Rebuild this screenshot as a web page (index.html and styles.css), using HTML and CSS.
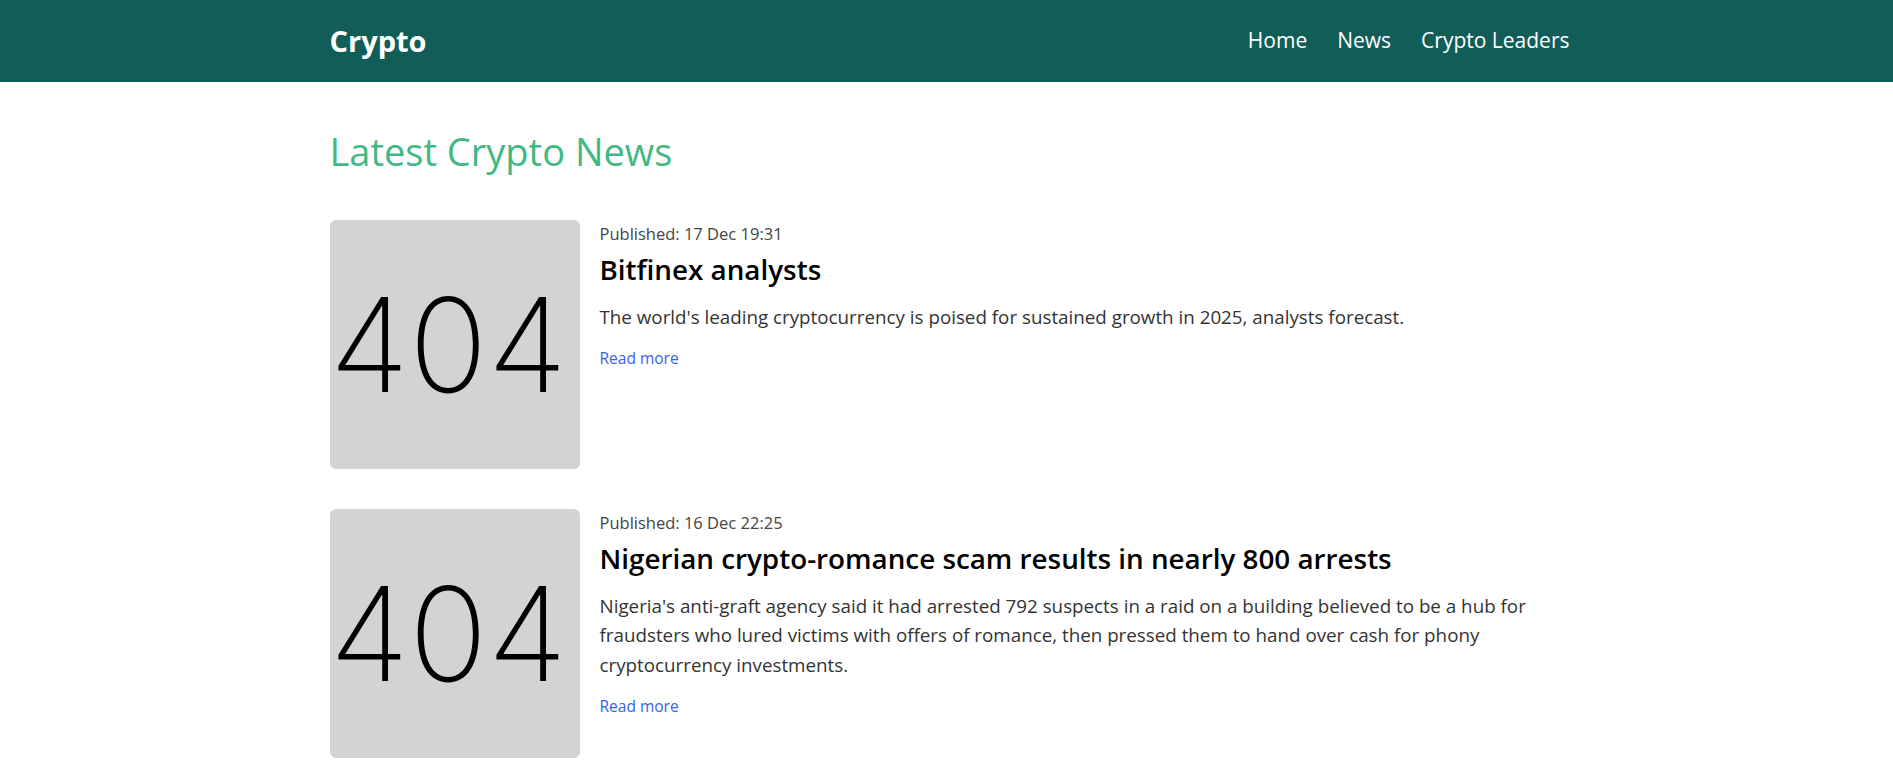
FILE: index.html
```html
<!DOCTYPE html>
<html lang="en">
<head>
<meta charset="utf-8">
<title>Crypto</title>
<link rel="stylesheet" href="styles.css">
</head>
<body>
<header class="navbar">
  <div class="container nav-inner">
    <a class="brand" href="#">Crypto</a>
    <nav class="links">
      <a href="#">Home</a>
      <a href="#">News</a>
      <a href="#">Crypto Leaders</a>
    </nav>
  </div>
</header>
<main class="container">
  <h1 class="page-title">Latest Crypto News</h1>
  <ul class="news-list">
    <li class="news-item">
      <div class="thumb"><span>404</span></div>
      <div class="news-body">
        <p class="meta">Published: 17 Dec 19:31</p>
        <h3 class="title">Bitfinex analysts</h3>
        <p class="desc">The world's leading cryptocurrency is poised for sustained growth in 2025, analysts forecast.</p>
        <a class="read-more" href="#">Read more</a>
      </div>
    </li>
    <li class="news-item">
      <div class="thumb"><span>404</span></div>
      <div class="news-body">
        <p class="meta">Published: 16 Dec 22:25</p>
        <h3 class="title">Nigerian crypto-romance scam results in nearly 800 arrests</h3>
        <p class="desc">Nigeria's anti-graft agency said it had arrested 792 suspects in a raid on a building believed to be a hub for fraudsters who lured victims with offers of romance, then pressed them to hand over cash for phony cryptocurrency investments.</p>
        <a class="read-more" href="#">Read more</a>
      </div>
    </li>
  </ul>
</main>
</body>
</html>
```
FILE: styles.css
```css
* { box-sizing: border-box; }
html, body { margin: 0; padding: 0; }
body {
  font-family: "Open Sans", "Noto Sans", sans-serif;
  color: #333;
  background: #fff;
  overflow: hidden;
}
.container {
  max-width: 1246px;
  margin: 0 auto;
  padding-left: 3px;
}
.navbar {
  background: #115e59;
  height: 82px;
}
.nav-inner {
  height: 100%;
  display: flex;
  align-items: center;
  justify-content: space-between;
  padding-bottom: 2px;
}
.brand {
  color: #fff;
  font-weight: 700;
  font-size: 29px;
  text-decoration: none;
  padding-left: 3px;
}
.links {
  display: flex;
  gap: 30px;
}
.links a {
  color: #fff;
  font-size: 21px;
  text-decoration: none;
}
.page-title {
  margin: 47px 0 45px 3px;
  font-size: 38px;
  line-height: 1.2;
  font-weight: 400;
  color: #42b883;
}
.news-list {
  list-style: none;
  margin: 0;
  padding: 0 0 0 3px;
}
.news-item {
  display: flex;
  gap: 20px;
  margin-bottom: 40px;
}
.thumb {
  flex: 0 0 250px;
  height: 249px;
  background: #d3d3d3;
  border-radius: 6px;
  overflow: hidden;
  display: flex;
  align-items: center;
  justify-content: flex-start;
}
.thumb span {
  font-family: "Inter", "Lato", sans-serif;
  font-weight: 200;
  font-size: 130px;
  line-height: 1;
  color: #000;
  margin-top: 2px;
}
.news-body {
  flex: 1;
  padding-top: 2px;
}
.meta {
  margin: 0;
  font-size: 16.5px;
  line-height: 24px;
  color: #444;
}
.title {
  margin: 6px 0 0;
  font-size: 27.8px;
  line-height: 34px;
  font-weight: 600;
  color: #000;
}
.desc {
  margin: 17px 0 0;
  font-size: 18.8px;
  line-height: 29.6px;
  color: #333;
}
.read-more {
  display: inline-block;
  margin-top: 15px;
  font-size: 15.5px;
  line-height: 22px;
  color: #3563e9;
  text-decoration: none;
}
```
